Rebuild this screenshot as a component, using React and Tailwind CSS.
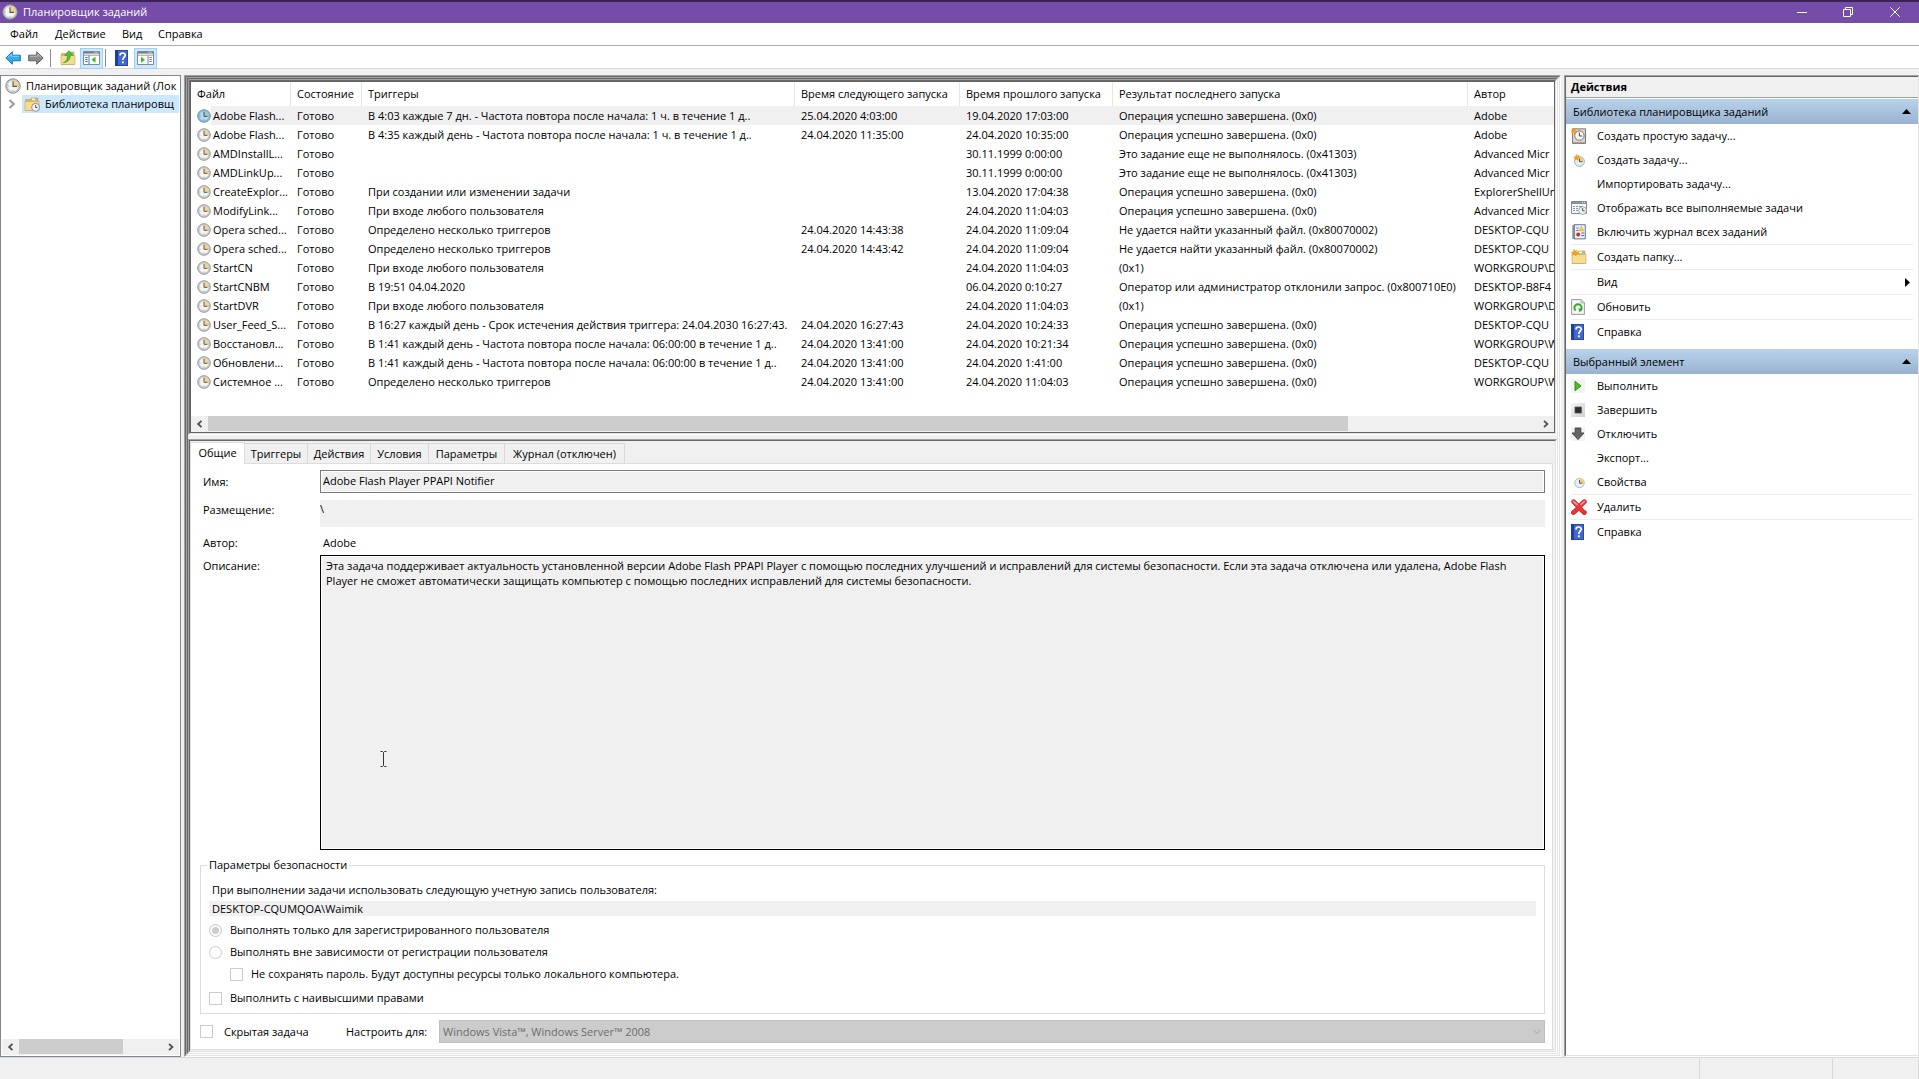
import React from 'react';
import { clsx } from 'clsx';

const DONE = 'Операция успешно завершена. (0x0)';
const NOT_RUN = 'Это задание еще не выполнялось. (0x41303)';
const NO_FILE = 'Не удается найти указанный файл. (0x80070002)';
const EVERY_SIX = 'В 1:41 каждый день - Частота повтора после начала: 06:00:00 в течение 1 д..';

const tasks = [
    ['Adobe Flash...', 'В 4:03 каждые 7 дн. - Частота повтора после начала: 1 ч. в течение 1 д..', '25.04.2020 4:03:00', '19.04.2020 17:03:00', DONE, 'Adobe'],
    ['Adobe Flash...', 'В 4:35 каждый день - Частота повтора после начала: 1 ч. в течение 1 д..', '24.04.2020 11:35:00', '24.04.2020 10:35:00', DONE, 'Adobe'],
    ['AMDInstallL...', '', '', '30.11.1999 0:00:00', NOT_RUN, 'Advanced Micr'],
    ['AMDLinkUp...', '', '', '30.11.1999 0:00:00', NOT_RUN, 'Advanced Micr'],
    ['CreateExplor...', 'При создании или изменении задачи', '', '13.04.2020 17:04:38', DONE, 'ExplorerShellUn'],
    ['ModifyLink...', 'При входе любого пользователя', '', '24.04.2020 11:04:03', DONE, 'Advanced Micr'],
    ['Opera sched...', 'Определено несколько триггеров', '24.04.2020 14:43:38', '24.04.2020 11:09:04', NO_FILE, 'DESKTOP-CQU'],
    ['Opera sched...', 'Определено несколько триггеров', '24.04.2020 14:43:42', '24.04.2020 11:09:04', NO_FILE, 'DESKTOP-CQU'],
    ['StartCN', 'При входе любого пользователя', '', '24.04.2020 11:04:03', '(0x1)', 'WORKGROUP\\D'],
    ['StartCNBM', 'В 19:51 04.04.2020', '', '06.04.2020 0:10:27', 'Оператор или администратор отклонили запрос. (0x800710E0)', 'DESKTOP-B8F4'],
    ['StartDVR', 'При входе любого пользователя', '', '24.04.2020 11:04:03', '(0x1)', 'WORKGROUP\\D'],
    ['User_Feed_S...', 'В 16:27 каждый день - Срок истечения действия триггера: 24.04.2030 16:27:43.', '24.04.2020 16:27:43', '24.04.2020 10:24:33', DONE, 'DESKTOP-CQU'],
    ['Восстановл...', EVERY_SIX, '24.04.2020 13:41:00', '24.04.2020 10:21:34', DONE, 'WORKGROUP\\W'],
    ['Обновлени...', EVERY_SIX, '24.04.2020 13:41:00', '24.04.2020 1:41:00', DONE, 'DESKTOP-CQU'],
    ['Системное ...', 'Определено несколько триггеров', '24.04.2020 13:41:00', '24.04.2020 11:04:03', DONE, 'WORKGROUP\\W'],
];

const columns = [
    { title: 'Файл', width: 'w-[100px]' },
    { title: 'Состояние', width: 'w-[71px]' },
    { title: 'Триггеры', width: 'w-[433px]' },
    { title: 'Время следующего запуска', width: 'w-[165px]' },
    { title: 'Время прошлого запуска', width: 'w-[153px]' },
    { title: 'Результат последнего запуска', width: 'w-[355px]' },
    { title: 'Автор', width: '' },
];

const tabs = [
    { title: 'Триггеры', width: 'w-[63px]' },
    { title: 'Действия', width: 'w-[63px]' },
    { title: 'Условия', width: 'w-[58px]' },
    { title: 'Параметры', width: 'w-[76px]' },
    { title: 'Журнал (отключен)', width: 'w-[120px]' },
];

/* Icons */
const Clock = ({ className, blue }) => (
    <svg viewBox="0 0 16 16" className={className}>
        <circle cx="8" cy="8" r="7.2" fill={blue ? '#8fb9d8' : '#d4d4d4'} stroke={blue ? '#5f8aa9' : '#8b8b8b'} strokeWidth="1" />
        <circle cx="8" cy="8" r="5.7" fill={blue ? '#b5d8ef' : '#f4f4f2'} stroke={blue ? '#7da9c9' : '#b0b0b0'} strokeWidth=".6" />
        <path d="M8 8V2.6A5.4 5.4 0 0 1 13.4 8Z" fill={blue ? '#a9c8c4' : '#f3d48a'} />
        <path d="M8 3.2V8.4H12" fill="none" stroke={blue ? '#24506f' : '#555'} strokeWidth="1.1" />
        <path d="M3 8h1M8 12v1M12.6 8h.6" stroke={blue ? '#4f7d9f' : '#999'} strokeWidth=".8" />
    </svg>
);

const Star = () => (
    <path d="M4 0 5 2.6 7.8 1.4 6.8 4.1 9 5.4 6.4 6 6.4 8.6 4.2 6.9 1.8 8.2 2.3 5.6 0 4.3 2.7 3.4Z" fill="#f7a01d" stroke="#e98b0c" strokeWidth=".3" />
);

const Folder = ({ children }) => (
    <svg viewBox="0 0 16 16" className="size-4">
        <path d="M1.5 3.5h5l1-1.5h6.5v12.5h-12.5Z" fill="#dfb455" stroke="#c29a45" strokeWidth=".6" />
        <path d="M8 2.6h5v1.6h-5Z" fill="#fff" />
        <path d="M11 2.6h2v1.2h-2Z" fill="#56a5e0" />
        <path d="M1 5.4h14v9.1H1Z" fill="#f7dc8f" stroke="#c8a353" strokeWidth=".6" />
        {children}
    </svg>
);

const Arrow = ({ back }) => (
    <svg viewBox="0 0 16 14" className="h-[14px] w-4">
        {back
            ? <path d="M.8 7 7.3.8V4.2H15.3V9.8H7.3V13.2Z" fill="#35aaf0" stroke="#1b72b5" strokeWidth="1" />
            : <path d="M15.2 7 8.7.8V4.2H.7V9.8H8.7V13.2Z" fill="#8b8b8b" stroke="#5f5f5f" strokeWidth="1" />}
        <path d={back ? 'M3 6.4 6.6 3V5.3H14' : 'M2 5.3H9.8V3L13 6.2'} fill="none" stroke={back ? '#8fd8fb' : '#bdbdbd'} strokeWidth=".9" />
    </svg>
);

const PanelIcon = ({ right }) => (
    <svg viewBox="0 0 17 14" className="h-[14px] w-[17px]">
        <path d="M.5.5h16v13H.5Z" fill="#fff" stroke="#85898e" />
        <path d="M1 1h15v1.6H1Z" fill="#777d84" />
        <path d="M11.5 1.3h1M13.5 1.3h1" stroke="#fff" />
        <path d="M1 4.2h15" stroke="#9a9ea3" />
        {right
            ? <path d="M11 4.5V13M12.3 6.5h2.6M12.3 8.5h2.6M12.3 10.5h2.6" stroke="#6f89a5" />
            : <path d="M6 4.5V13M2.1 6.5h2.6M2.1 8.5h2.6M2.1 10.5h2.6" stroke="#4977ae" />}
        {right
            ? <path d="M4 5.8 8 8.8 4 11.8Z" fill="#35b821" />
            : <path d="M12.5 5.8 8.5 8.8 12.5 11.8Z" fill="#35b821" />}
    </svg>
);

const Help = () => (
    <svg viewBox="0 0 13 16" className="h-4 w-[13px]">
        <path d="M0 0h13v16H0Z" fill="#4167d0" />
        <path d="M0 0h3v16H0Z" fill="#1c3f9e" />
        <path d="M.4.4h12.2v15.2H.4Z" fill="none" stroke="#223f92" strokeWidth=".8" />
        <path d="M5 5.4C5 2.2 10.4 2.2 10.2 5.3 10.1 7.2 7.8 7.2 7.8 10" fill="none" stroke="#fff" strokeWidth="1.7" />
        <path d="M6.9 11.4h1.9v1.9H6.9Z" fill="#fff" />
    </svg>
);

const NewBasic = () => (
    <svg viewBox="0 0 16 16" className="size-4">
        <path d="M1.5.8h13v14.4h-13Z" fill="#dcd5cd" stroke="#8b6b5b" strokeWidth=".9" />
        <path d="M1.5 15.2h13V1" fill="none" stroke="#777" strokeWidth="1" />
        <circle cx="8.4" cy="7.6" r="4.7" fill="#f6f6f3" stroke="#777" strokeWidth="1" />
        <path d="M8.4 4.6V8h2.8" fill="none" stroke="#444" strokeWidth="1" />
        <g transform="translate(-.5 0) scale(.72)"><Star /></g>
    </svg>
);

const NewTask = () => (
    <svg viewBox="0 0 16 16" className="size-4">
        <circle cx="8.5" cy="9.5" r="4.9" fill="#e6eef5" stroke="#9fb1c0" strokeWidth="1" />
        <path d="M8.5 9.5V5A4.5 4.5 0 0 1 13 9.5Z" fill="#f6cf78" />
        <path d="M8.5 6.5v3.2h3" fill="none" stroke="#555" strokeWidth="1" />
        <g transform="translate(2.2 2) scale(.78)"><Star /></g>
    </svg>
);

const Running = () => (
    <svg viewBox="0 0 16 14" className="h-[14px] w-4">
        <path d="M.5.5h15v12H.5Z" fill="#f7f7f7" stroke="#85898e" />
        <path d="M1 1h14v2H1Z" fill="#8c9299" />
        <path d="M11 1.6h1M13 1.6h1" stroke="#fff" strokeWidth=".8" />
        <path d="M2 5.5h2m1 0h2m1 0h3M2 7.5h2m1 0h2M2 9.5h2m1 0h2" stroke="#8996a5" />
        <circle cx="11.6" cy="9.6" r="3.9" fill="#eef2ee" stroke="#8ba0a5" strokeWidth=".9" />
        <path d="M11.6 7v2.8h2" fill="none" stroke="#444" strokeWidth=".9" />
    </svg>
);

const Journal = () => (
    <svg viewBox="0 0 16 16" className="size-4">
        <path d="M3 .7h11.3v14.2H3Z" fill="#e9eef8" stroke="#56698f" strokeWidth=".9" />
        <path d="M1 2h3M1 4h3M1 6h3M1 8h3M1 10h3M1 12h3M1 14h3" stroke="#555" strokeWidth=".9" />
        <path d="M5.4 4h2.2M5.4 6.5h2.2M10.4 9h2.8M10.4 11.5h2.8" stroke="#526b9c" />
        <path d="M8.2 6.8 10.4 2.3 12.8 6.8Z" fill="#f6d53a" stroke="#ceaa20" strokeWidth=".6" />
        <circle cx="7.2" cy="10.4" r="2" fill="#d72a24" />
    </svg>
);

const Refresh = () => (
    <svg viewBox="0 0 14 16" className="h-4 w-[14px]">
        <path d="M.6.6h9.6l3.2 3.2v11.6H.6Z" fill="#f8f8f8" stroke="#8d8d8d" strokeWidth=".9" />
        <path d="M10 .8v3.2h3.2" fill="#ddd" stroke="#9a9a9a" strokeWidth=".7" />
        <path d="M4.6 11.6A3.6 3.6 0 1 1 9.4 11.6" fill="none" stroke="#31aa2a" strokeWidth="2" />
        <path d="M7.4 9.2 11.6 10 8.6 13.4Z" fill="#31aa2a" />
    </svg>
);

const Run = () => (
    <svg viewBox="0 0 14 14" className="size-[14px] bg-[#f3f3f3]">
        <path d="M4 2.2 10 7 4 11.8Z" fill="#43c51f" stroke="#2b8f17" strokeWidth=".9" />
    </svg>
);

const Stop = () => (
    <svg viewBox="0 0 14 14" className="size-[14px] bg-gradient-to-br from-[#f5f5f5] to-[#cfcfcf]">
        <path d="M4 4h6.4v6H4Z" fill="#2d2d2d" stroke="#555" strokeWidth=".8" />
    </svg>
);

const Disable = () => (
    <svg viewBox="0 0 14 14" className="size-[14px] bg-[#f3f3f3]">
        <path d="M4.2 1h5.6v5H13L7 12.6 1 6h3.2Z" fill="#666" stroke="#3d3d3d" strokeWidth=".9" />
    </svg>
);

const Delete = () => (
    <svg viewBox="0 0 16 16" className="size-4">
        <path d="M2.6 2.6Q6 6 8 8.4 10 11 13.4 13.6M13.4 2.6Q10 5.4 8 8.4 5.5 11 2.4 13.6" fill="none" stroke="#b81f1f" strokeWidth="4.6" strokeLinecap="round" />
        <path d="M2.6 2.6Q6 6 8 8.4 10 11 13.4 13.6M13.4 2.6Q10 5.4 8 8.4 5.5 11 2.4 13.6" fill="none" stroke="#ef3434" strokeWidth="3.6" strokeLinecap="round" />
        <path d="M2.4 2.3 6 5.6M13.4 2.3 10 5.4" stroke="#f79a9a" strokeWidth="1.6" strokeLinecap="round" />
    </svg>
);

const Props = () => (
    <svg viewBox="0 0 16 16" className="size-4">
        <circle cx="8.5" cy="9" r="4.7" fill="#e8f0f6" stroke="#a9bac8" strokeWidth="1" />
        <path d="M8.5 9V3.8A5 5 0 0 1 13.6 9Z" fill="#f6cf78" />
        <path d="M8.5 6v3.2h3" fill="none" stroke="#4a5a68" strokeWidth="1" />
    </svg>
);

const Chevron = ({ left, className }) => (
    <svg viewBox="0 0 8 8" className={clsx('size-2', className)}>
        <path d={left ? 'M5.5 .8 2.1 4 5.5 7.2' : 'M2 .8 5.4 4 2 7.2'} fill="none" stroke="currentColor" strokeWidth="1.8" />
    </svg>
);

const libraryActions = [
    { title: 'Создать простую задачу...', icon: <NewBasic /> },
    { title: 'Создать задачу...', icon: <NewTask /> },
    { title: 'Импортировать задачу...' },
    { title: 'Отображать все выполняемые задачи', icon: <Running /> },
    { title: 'Включить журнал всех заданий', icon: <Journal /> },
    { title: 'Создать папку...', icon: <Folder><g transform="scale(.8)"><Star /></g></Folder>, line: true },
    { title: 'Вид', line: true, submenu: true },
    { title: 'Обновить', icon: <Refresh />, line: true },
    { title: 'Справка', icon: <Help />, line: true },
];

const itemActions = [
    { title: 'Выполнить', icon: <Run /> },
    { title: 'Завершить', icon: <Stop /> },
    { title: 'Отключить', icon: <Disable /> },
    { title: 'Экспорт...' },
    { title: 'Свойства', icon: <Props /> },
    { title: 'Удалить', icon: <Delete />, line: true },
    { title: 'Справка', icon: <Help />, line: true },
];

/* Sunken 2px frame, the classic client edge */
const Sunken = ({ className, children }) => (
    <div className="flex min-h-0 min-w-0 flex-1 border border-t-[#a0a0a0] border-r-white border-b-white border-l-[#a0a0a0]">
        <div className={clsx('flex min-h-0 min-w-0 flex-1 flex-col border border-t-[#696969] border-r-[#e3e3e3] border-b-[#e3e3e3] border-l-[#696969]', className)}>
            {children}
        </div>
    </div>
);

const ScrollBar = ({ size }) => (
    <div className="flex h-4 shrink-0 bg-[#f0f0f0] text-[#505050]">
        <button aria-label="Влево" className="flex w-[17px] items-center justify-center"><Chevron left /></button>
        <div className="flex-1"><div className="h-[15px] bg-[#cdcdcd]" style={{ width: `${size}%` }} /></div>
        <button aria-label="Вправо" className="flex w-[17px] items-center justify-center"><Chevron /></button>
    </div>
);

const TitleBar = () => (
    <header className="flex h-[23px] shrink-0 items-center border-t-2 border-[#3a2355] bg-[#744da9] pb-[2px] pl-[2px] text-white">
        <Clock className="size-4" />
        <h1 className="flex-1 pl-[5px]">Планировщик заданий</h1>
        <button aria-label="Свернуть" className="flex h-full w-[46px] items-center justify-center">
            <svg viewBox="0 0 10 10" className="size-[10px]"><path d="M0 5.5h10" stroke="#fff" /></svg>
        </button>
        <button aria-label="Развернуть" className="flex h-full w-[46px] items-center justify-center">
            <svg viewBox="0 0 10 10" className="size-[10px]"><path d="M.5 2.5h7v7h-7ZM2.5 2.5v-2h7v7h-2" fill="none" stroke="#fff" /></svg>
        </button>
        <button aria-label="Закрыть" className="flex h-full w-12 items-center justify-center">
            <svg viewBox="0 0 10 10" className="size-[10px]"><path d="M.3.3l9.4 9.4M9.7.3.3 9.7" stroke="#fff" /></svg>
        </button>
    </header>
);

const Toolbar = () => (
    <div className="flex h-[23px] shrink-0 items-center border-b border-[#d7d7d7] bg-white pt-[2px] pl-[5px]">
        <button aria-label="Назад"><Arrow back /></button>
        <button aria-label="Вперед" className="ml-[7px]"><Arrow /></button>
        <div className="ml-[6px] h-[18px] w-px bg-[#8d8d8d]" />
        <button aria-label="Вверх" className="ml-[9px]">
            <Folder><path d="M3.4 12.6C6.6 11.6 7.6 8.6 7.4 5.4H4.8L9 .8 13 5.2H10.4C10.4 9.4 7.6 12.4 3.4 12.6Z" fill="#4fc339" stroke="#2f8f26" strokeWidth=".6" /></Folder>
        </button>
        <button aria-label="Дерево консоли" className="ml-1 flex h-[21px] w-[23px] items-center justify-center border border-[#99d1ff] bg-[#cce8ff]"><PanelIcon /></button>
        <div className="ml-[2px] h-[18px] w-px bg-[#8d8d8d]" />
        <button aria-label="Справка" className="ml-[9px]"><Help /></button>
        <button aria-label="Панель действий" className="ml-[6px] flex h-[21px] w-[23px] items-center justify-center border border-[#99d1ff] bg-[#cce8ff]"><PanelIcon right /></button>
    </div>
);

const Tree = () => (
    <aside className="flex w-[181px] shrink-0 flex-col border border-[#828790] bg-white p-px">
        <div className="flex h-[18px] items-center overflow-hidden pl-[3px] whitespace-nowrap">
            <Clock className="size-4 shrink-0" />
            <span className="pl-[5px]">Планировщик заданий (Лок</span>
        </div>
        <div className="flex h-[18px] items-center overflow-hidden whitespace-nowrap">
            <span className="flex w-5 shrink-0 justify-center text-[#a0a0a0]"><Chevron className="scale-125" /></span>
            <span className="flex h-full flex-1 items-center bg-[#cce8ff] pl-[2px]">
                <span className="size-4 shrink-0">
                    <Folder>
                        <circle cx="11.6" cy="11.4" r="4" fill="#f1f3f4" stroke="#8a8f94" />
                        <path d="M11.6 9v2.6h2" fill="none" stroke="#444" strokeWidth=".9" />
                    </Folder>
                </span>
                <span className="pl-[5px]">Библиотека планировщ</span>
            </span>
        </div>
        <div className="flex-1" />
        <ScrollBar size={72.7} />
    </aside>
);

const TaskList = () => (
    <div className="flex min-h-0 flex-1 flex-col overflow-hidden border border-[#646464] bg-white">
        <div className="min-h-0 flex-1 overflow-hidden">
            <table className="w-full table-fixed border-separate border-spacing-0 whitespace-nowrap">
                <thead>
                    <tr className="h-6">
                        {columns.map((col) => (
                            <th key={col.title} className={clsx('border-r border-[#e5e5e5] p-0 pl-[6px] text-left font-normal last:border-r-0', col.width)}>{col.title}</th>
                        ))}
                    </tr>
                </thead>
                <tbody>
                    {tasks.map(([name, ...cells], i) => (
                        <tr key={i} className="h-[19px]">
                            <td className="p-0 pl-[6px]">
                                <div className="flex h-[19px] items-center">
                                    <Clock className="size-[14px] shrink-0" blue={i === 0} />
                                    <span className={clsx('flex-1 pl-[2px] leading-[19px]', i === 0 && 'bg-[#f0f0f0]')}>{name}</span>
                                </div>
                            </td>
                            {['Готово', ...cells].map((cell, n) => (
                                <td key={n} className={clsx('overflow-hidden p-0 pl-[6px]', i === 0 && 'bg-[#f0f0f0]')}>{cell}</td>
                            ))}
                        </tr>
                    ))}
                </tbody>
            </table>
        </div>
        <ScrollBar size={85.8} />
    </div>
);

const box = 'size-[13px] shrink-0 appearance-none border border-[#cccccc] bg-white';

const General = () => (
    <div className="flex min-h-0 flex-1 flex-col border border-[#dcdcdc] bg-white pt-[6px] pr-[7px] pb-[6px] pl-[9px]">
        <div className="flex h-[23px] items-center">
            <label htmlFor="name" className="w-[120px] pl-[3px]">Имя:</label>
            <input id="name" readOnly defaultValue="Adobe Flash Player PPAPI Notifier" className="h-full flex-1 border border-[#7a7a7a] bg-[#f0f0f0] px-[2px] pb-[2px] shadow-[inset_0_0_0_1px_#fff] outline-none" />
        </div>
        <div className="mt-[7px] flex h-[27px]">
            <label htmlFor="location" className="w-[120px] pt-[2px] pl-[3px]">Размещение:</label>
            <input id="location" readOnly defaultValue="\" className="h-full flex-1 bg-[#f0f0f0] pb-[11px] outline-none" />
        </div>
        <div className="mt-2 flex h-4 items-center">
            <span className="w-[120px] pl-[3px]">Автор:</span>
            <span className="pl-[3px]">Adobe</span>
        </div>
        <div className="mt-1 flex min-h-0 flex-1">
            <label htmlFor="description" className="w-[120px] pt-[3px] pl-[3px]">Описание:</label>
            <textarea
                id="description"
                readOnly
                className="flex-1 resize-none border border-black bg-[#f0f0f0] px-[5px] pt-[2px] leading-[15px] shadow-[inset_0_0_0_1px_#fff] outline-none"
                defaultValue="Эта задача поддерживает актуальность установленной версии Adobe Flash PPAPI Player с помощью последних улучшений и исправлений для системы безопасности. Если эта задача отключена или удалена, Adobe Flash Player не сможет автоматически защищать компьютер с помощью последних исправлений для системы безопасности."
            />
        </div>
        <fieldset className="mt-[7px] h-[157px] shrink-0 border border-[#dcdcdc] px-[6px]">
            <legend className="px-[2px] leading-4">Параметры безопасности</legend>
            <div className="flex flex-col px-[2px] pt-[9px]">
                <label htmlFor="account" className="pl-[3px] leading-4">При выполнении задачи использовать следующую учетную запись пользователя:</label>
                <input id="account" readOnly defaultValue="DESKTOP-CQUMQOA\Waimik" className="mt-[3px] h-[15px] bg-[#f0f0f0] pl-[3px] outline-none" />
                <label className="mt-[3px] flex h-[22px] items-center gap-2">
                    <input type="radio" name="logon" disabled defaultChecked className="size-[13px] appearance-none rounded-full border border-[#cccccc] bg-[#cccccc] shadow-[inset_0_0_0_2px_#fff]" />
                    Выполнять только для зарегистрированного пользователя
                </label>
                <label className="flex h-[22px] items-center gap-2">
                    <input type="radio" name="logon" disabled className="size-[13px] appearance-none rounded-full border border-[#cccccc] bg-white" />
                    Выполнять вне зависимости от регистрации пользователя
                </label>
                <label className="ml-[21px] flex h-[22px] items-center gap-2">
                    <input type="checkbox" disabled className={box} />
                    Не сохранять пароль. Будут доступны ресурсы только локального компьютера.
                </label>
                <label className="mt-[2px] flex h-[22px] items-center gap-2">
                    <input type="checkbox" disabled className={box} />
                    Выполнить с наивысшими правами
                </label>
            </div>
        </fieldset>
        <div className="mt-[6px] flex h-[23px] shrink-0 items-center">
            <label className="flex w-[146px] items-center gap-[11px]">
                <input type="checkbox" disabled className={box} />
                Скрытая задача
            </label>
            <label htmlFor="configure" className="w-[93px]">Настроить для:</label>
            <div className="relative h-full flex-1">
                <select id="configure" disabled className="h-full w-full appearance-none border border-[#bfbfbf] bg-[#cccccc] pl-[3px] text-[#6d6d6d] opacity-100">
                    <option>Windows Vista™, Windows Server™ 2008</option>
                </select>
                <svg viewBox="0 0 8 8" className="absolute top-2 right-1 size-2"><path d="M.5 2 4 5.5 7.5 2" fill="none" stroke="#a3a3a3" /></svg>
            </div>
        </div>
    </div>
);

const Actions = ({ title, items }) => (
    <section>
        <h3 className="flex h-[25px] items-center justify-between bg-gradient-to-b from-[#bad3eb] to-[#98b2d1] pr-[7px] pl-[7px]">
            {title}
            <svg viewBox="0 0 9 5" className="h-[5px] w-[9px]"><path d="M4.5 0 9 5H0Z" /></svg>
        </h3>
        <ul>
            {items.map((item) => (
                <li key={item.title} className={clsx('mx-[5px]', item.line && 'border-t border-[#ededed]')}>
                    <button className="flex h-6 w-full items-center text-left">
                        <span className="flex w-[26px]">{item.icon}</span>
                        <span className="flex-1">{item.title}</span>
                        {item.submenu && <svg viewBox="0 0 5 9" className="mr-[3px] h-[9px] w-[5px]"><path d="M0 0 5 4.5 0 9Z" /></svg>}
                    </button>
                </li>
            ))}
        </ul>
    </section>
);

const App = () => (
    <div className="relative flex h-screen flex-col overflow-hidden bg-[#f0f0f0] font-['Open_Sans',sans-serif] text-[11px] leading-4 text-black">
        <TitleBar />
        <nav className="flex h-[23px] shrink-0 items-center border-b border-[#acacb1] bg-white pl-[10px]">
            <button className="w-[45px] text-left">Файл</button>
            <button className="w-[67px] text-left">Действие</button>
            <button className="w-9 text-left">Вид</button>
            <button className="text-left">Справка</button>
        </nav>
        <Toolbar />

        <main className="flex min-h-0 flex-1 gap-[3px] pt-[6px]">
            <Tree />

            <div className="flex min-w-0 flex-1">
                <Sunken>
                    <Sunken className="gap-1">
                        <div className="flex h-[356px] shrink-0">
                            <Sunken><TaskList /></Sunken>
                        </div>
                        <Sunken className="pr-[2px] pb-px">
                            <div className="flex h-[22px] shrink-0 items-end">
                                <button className="z-10 -mb-px h-[22px] w-[55px] border border-b-0 border-[#dcdcdc] bg-white pb-[2px]">Общие</button>
                                {tabs.map((tab) => (
                                    <button key={tab.title} className={clsx('h-5 border border-b-0 border-l-0 border-[#d9d9d9]', tab.width)}>{tab.title}</button>
                                ))}
                            </div>
                            <General />
                        </Sunken>
                    </Sunken>
                </Sunken>
            </div>

            <aside className="flex w-[355px] shrink-0 flex-col border border-t-[#a0a0a0] border-r-[#e3e3e3] border-b-white border-l-[#a0a0a0]">
                <div className="flex-1 border border-t-[#696969] border-r-0 border-b-[#e3e3e3] border-l-[#696969] bg-white">
                    <h2 className="mb-px flex h-[21px] items-center border-b border-[#a0a0a0] bg-[#f0f0f0] pl-[5px] font-bold">Действия</h2>
                    <div className="flex flex-col gap-[5px]">
                        <Actions title="Библиотека планировщика заданий" items={libraryActions} />
                        <Actions title="Выбранный элемент" items={itemActions} />
                    </div>
                </div>
            </aside>
        </main>

        <footer className="flex h-[22px] shrink-0 justify-end border-t border-[#d7d7d7] pt-px">
            <div className="w-[133px] border-l border-[#d7d7d7]" />
            <div className="w-[87px] border-x border-[#d7d7d7]" />
        </footer>

        {/* Text cursor over the description */}
        <svg viewBox="0 0 7 16" className="absolute top-[751px] left-[380px] h-4 w-[7px]">
            <path d="M.5.5h2l1 1 1-1h2M3.5 1.5v13M.5 15.5h2l1-1 1 1h2" fill="none" stroke="#333" />
        </svg>
    </div>
);

export default App;
